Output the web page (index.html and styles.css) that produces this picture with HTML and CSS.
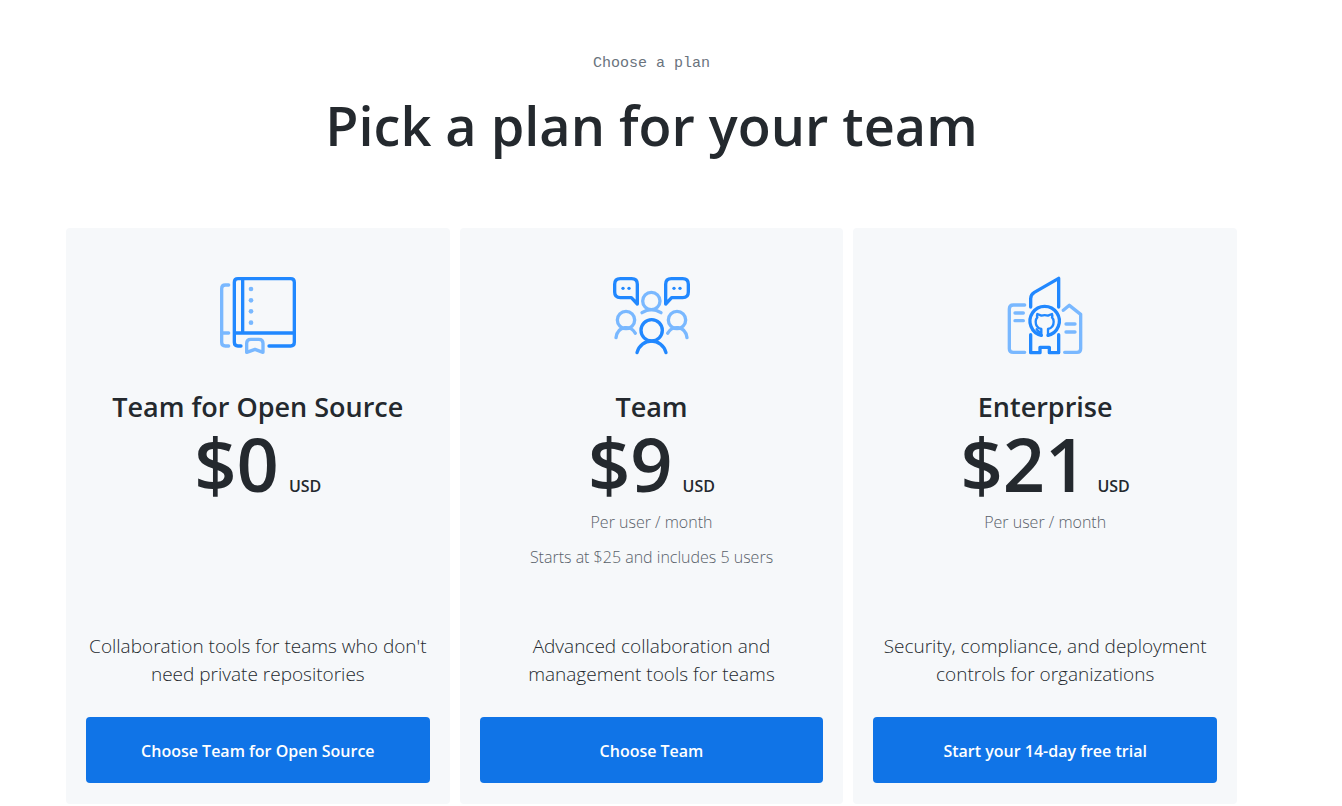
FILE: index.html
```html
<!DOCTYPE html>
<html lang="en">
<head>
<meta charset="utf-8">
<meta name="viewport" content="width=device-width, initial-scale=1">
<title>Pick a plan for your team</title>
<link rel="stylesheet" href="styles.css">
</head>
<body>
<main class="page">
  <header class="intro">
    <p class="eyebrow">Choose a plan</p>
    <h1 class="headline">Pick a plan for your team</h1>
  </header>
  <div class="plans">
    <section class="plan">
      <svg class="icon" viewBox="24 24 240 240" aria-hidden="true">
        <g class="light">
          <path d="M56 51H46Q35 51 35 62V223Q35 234 46 234H56M35 195H56"/>
          <path d="M110 253V226Q110 214 122 214H147Q159 214 159 226V253L135 244Z"/>
        </g>
        <g class="dots"><circle cx="123" cy="63" r="7"/><circle cx="123" cy="97" r="7"/><circle cx="123" cy="130" r="7"/><circle cx="123" cy="164" r="7"/></g>
        <path class="dark" d="M93 234H84Q73 234 73 223V43Q73 32 84 32H242Q253 32 253 43V223Q253 234 242 234H177M98 32V195M73 195H253"/>
      </svg>
      <h2 class="name">Team for Open Source</h2>
      <p class="price"><span class="amount">$0</span> <span class="currency">USD</span></p>
      <div class="terms"></div>
      <p class="summary">Collaboration tools for teams who don't need private repositories</p>
      <a class="action" href="#open-source">Choose Team for Open Source</a>
    </section>
    <section class="plan">
      <svg class="icon" viewBox="21 24 240 240" aria-hidden="true">
        <g class="light">
          <circle cx="142" cy="99" r="26"/><path d="M114 134Q142 116 171 134"/>
          <circle cx="66" cy="156" r="26"/><path d="M36 209C41 172 82 171 94 196"/>
          <circle cx="219" cy="156" r="26"/><path d="M249 209C244 172 203 171 191 196"/>
        </g>
        <g class="dark">
          <circle cx="143" cy="187" r="32"/><path d="M99 254C110 208 175 208 186 254"/>
          <path d="M49 32H83Q100 32 100 49V108L82 89H49Q32 89 32 72V49Q32 32 49 32Z"/>
          <path d="M236 32H202Q185 32 185 49V108L203 89H236Q253 89 253 72V49Q253 32 236 32Z"/>
        </g>
        <g class="dots-dark"><circle cx="57" cy="61" r="5"/><circle cx="75" cy="61" r="5"/><circle cx="210" cy="61" r="5"/><circle cx="228" cy="61" r="5"/></g>
      </svg>
      <h2 class="name">Team</h2>
      <p class="price"><span class="amount">$9</span> <span class="currency">USD</span></p>
      <div class="terms"><p>Per user / month</p><p>Starts at $25 and includes 5 users</p></div>
      <p class="summary">Advanced collaboration and management tools for teams</p>
      <a class="action" href="#team">Choose Team</a>
    </section>
    <section class="plan">
      <svg class="icon" viewBox="22 24 240 240" aria-hidden="true">
        <path class="light" d="M81 111H47Q35 111 35 123V242Q35 253 47 253H81M52 135H77M52 158H77M197 127L215 112L249 139V242Q249 253 238 253H201M205 168H232M205 192H232"/>
        <g class="dark">
          <path d="M99 117V92Q99 80 110 73L183 31V117M99 200V254H127V238H155V254H183V200"/>
          <path d="M131 202A44 44 0 1 1 151 202"/>
          <path class="cat" d="M131 202V183Q114 179 114 161Q114 153 119 148Q117 143 119 138L131 143Q141 140 151 143L163 138Q165 143 163 148Q168 153 168 161Q168 179 151 183V202M130 193Q123 193 117 184"/>
        </g>
      </svg>
      <h2 class="name">Enterprise</h2>
      <p class="price"><span class="amount">$21</span> <span class="currency">USD</span></p>
      <div class="terms"><p>Per user / month</p></div>
      <p class="summary">Security, compliance, and deployment controls for organizations</p>
      <a class="action" href="#enterprise">Start your 14-day free trial</a>
    </section>
  </div>
</main>
</body>
</html>
```
FILE: styles.css
```css
* { box-sizing: border-box; }
body {
  margin: 0;
  background: #fff;
  color: #24292e;
  font-family: "Open Sans", "Noto Sans", sans-serif;
}
h1, h2, p { margin: 0; }
.page { padding: 52px 105px 2px 66px; }
.intro { text-align: center; }
.eyebrow {
  font-family: "Liberation Mono", monospace;
  font-size: 15px;
  line-height: 24px;
  color: #6a737d;
}
.headline {
  margin-top: 9px;
  font-size: 54px;
  font-weight: 600;
  line-height: 80px;
}
.plans {
  display: grid;
  grid-template-columns: repeat(3, 1fr);
  gap: 10px;
  margin-top: 63px;
}
.plan {
  display: flex;
  flex-direction: column;
  align-items: center;
  padding: 48px 20px 21px;
  border-radius: 4px;
  background: #f6f8fa;
  text-align: center;
}
.icon { width: 80px; height: 80px; fill: none; stroke-linecap: round; stroke-linejoin: round; }
.light { stroke: #79b8ff; stroke-width: 10; }
.dark { stroke: #2188ff; stroke-width: 10; }
.cat { stroke-width: 7; }
.dots { fill: #79b8ff; }
.dots-dark { fill: #2188ff; }
.name {
  margin-top: 31px;
  font-size: 27px;
  font-weight: 600;
  line-height: 40px;
}
.price {
  display: flex;
  align-items: baseline;
  gap: 10px;
  font-weight: 600;
  line-height: 74px;
}
.amount { font-size: 74px; }
.currency { font-size: 16px; line-height: 24px; }
.terms {
  min-height: 122px;
  margin-top: 9px;
  color: #586069;
  font-size: 16px;
  font-weight: 300;
  line-height: 24px;
}
.terms p + p { margin-top: 11px; }
.summary {
  font-size: 19px;
  font-weight: 300;
  line-height: 28px;
}
.action {
  width: 100%;
  margin-top: 29px;
  padding: 22px 8px 20px;
  border-radius: 4px;
  background: #1074e7;
  color: #fff;
  font-size: 16px;
  font-weight: 600;
  line-height: 24px;
  text-decoration: none;
}
```
